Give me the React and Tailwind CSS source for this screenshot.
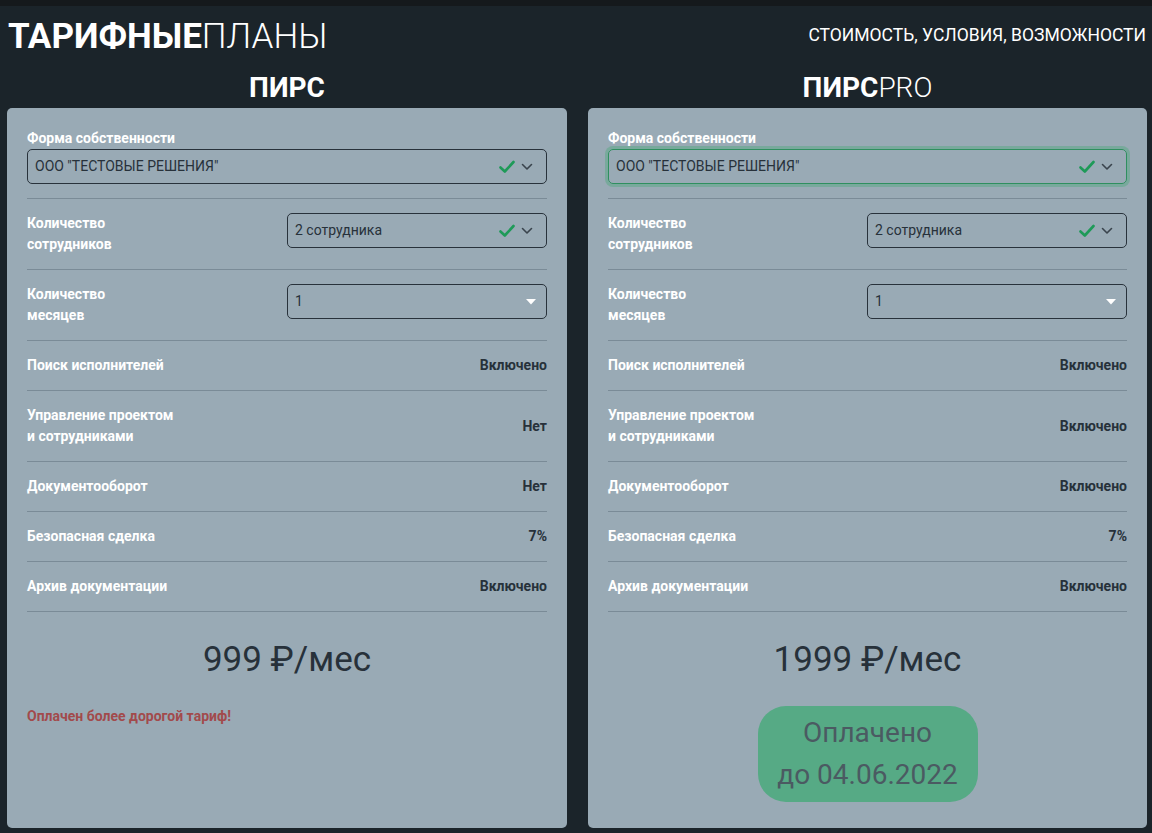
import React from "react";

const font = { fontFamily: "Roboto, 'Noto Sans', sans-serif" };

function Check() {
  return (
    <svg width="16" height="14" viewBox="0 0 16 14" className="shrink-0">
      <path d="M1.5 7.5 L5.8 11.5 L14.5 2" fill="none" stroke="#1e9a58" strokeWidth="2.6" strokeLinecap="round" strokeLinejoin="round" />
    </svg>
  );
}

function Chevron() {
  return (
    <svg width="12" height="8" viewBox="0 0 12 8" className="shrink-0">
      <path d="M1.5 1.5 L6 6 L10.5 1.5" fill="none" stroke="#3a444d" strokeWidth="1.6" strokeLinecap="round" strokeLinejoin="round" />
    </svg>
  );
}

function Select({ value, checked, focus, caret }) {
  return (
    <div
      className={
        "flex h-[35px] w-full items-center rounded-[5px] border pl-[7px] pr-[13px] " +
        (focus
          ? "border-[#2f8f5f] shadow-[0_0_0_3px_rgba(60,170,110,0.35)]"
          : "border-[#28323b]")
      }
    >
      <span className="flex-1 text-[14px] text-[#27313a]">{value}</span>
      {checked ? (
        <div className="flex items-center gap-[6px]">
          <Check />
          <Chevron />
        </div>
      ) : null}
      {caret ? (
        <svg width="10" height="6" viewBox="0 0 10 6" className="mr-[-3px]">
          <path d="M0 0 H10 L5 5.5 Z" fill="#ffffff" />
        </svg>
      ) : null}
    </div>
  );
}

function Row({ label, value }) {
  return (
    <div className="flex items-center justify-between border-b border-[#7a8b97] py-[14px] text-[14px] leading-[21px]">
      <div className="font-bold text-white">{label}</div>
      <div className="font-bold text-[#27313a]">{value}</div>
    </div>
  );
}

function SelectRow({ label, value, checked, caret }) {
  return (
    <div className="flex items-start justify-between border-b border-[#7a8b97] py-[14px] text-[14px] leading-[21px]">
      <div className="font-bold text-white">{label}</div>
      <div className="w-[260px]">
        <Select value={value} checked={checked} caret={caret} />
      </div>
    </div>
  );
}

function Card({ pro, features, price, footer }) {
  return (
    <div className="flex flex-col">
      <div className="flex h-[51px] items-center justify-center pt-[10px] text-[28px] leading-none text-white">
        <span className="font-bold">ПИРС</span>
        {pro ? <span className="font-light">PRO</span> : null}
      </div>
      <div className="h-[720px] rounded-[5px] bg-[#99aab5] px-[20px] pt-[20px]">
        <div className="border-b border-[#7a8b97] pb-[14px]">
          <div className="text-[14px] font-bold leading-[21px] text-white">Форма собственности</div>
          <Select value={'ООО "ТЕСТОВЫЕ РЕШЕНИЯ"'} checked focus={pro} />
        </div>
        <SelectRow label={<>Количество<br />сотрудников</>} value="2 сотрудника" checked />
        <SelectRow label={<>Количество<br />месяцев</>} value="1" caret />
        {features.map((f, i) => (
          <Row key={i} label={f[0]} value={f[1]} />
        ))}
        <div className="pt-[28px] text-center text-[35px] leading-[40px] text-[#27313a]">{price}</div>
        <div className="mt-[26px]">{footer}</div>
      </div>
    </div>
  );
}

export default function App() {
  const left = [
    ["Поиск исполнителей", "Включено"],
    [<>Управление проектом<br />и сотрудниками</>, "Нет"],
    ["Документооборот", "Нет"],
    ["Безопасная сделка", "7%"],
    ["Архив документации", "Включено"],
  ];
  const right = [
    ["Поиск исполнителей", "Включено"],
    [<>Управление проектом<br />и сотрудниками</>, "Включено"],
    ["Документооборот", "Включено"],
    ["Безопасная сделка", "7%"],
    ["Архив документации", "Включено"],
  ];
  return (
    <div className="min-h-[833px] w-[1152px] bg-[#1b242a]" style={font}>
      <div className="h-[6px] bg-[#15191c]" />
      <div className="flex items-start justify-between pl-[8px] pr-[6px] pt-[11px]">
        <div className="text-[35px] leading-[40px] text-white">
          <span className="font-bold">ТАРИФНЫЕ</span>
          <span className="font-light">ПЛАНЫ</span>
        </div>
        <div className="pt-[7px] text-[17.5px] leading-[22px] text-white">СТОИМОСТЬ, УСЛОВИЯ, ВОЗМОЖНОСТИ</div>
      </div>
      <div className="grid grid-cols-[560px_559px] gap-[21px] pl-[7px]">
        <Card
          features={left}
          price="999 ₽/мес"
          footer={
            <div className="pt-[1px] text-[14px] font-bold leading-[18px] text-[#a24a4c]">
              Оплачен более дорогой тариф!
            </div>
          }
        />
        <Card
          pro
          features={right}
          price="1999 ₽/мес"
          footer={
            <div className="flex justify-center">
              <div className="flex h-[96px] w-[220px] flex-col items-center justify-center rounded-[28px] bg-[#56aa85] text-[28px] leading-[42px] text-[#4b5a62]">
                <span>Оплачено</span>
                <span>до 04.06.2022</span>
              </div>
            </div>
          }
        />
      </div>
    </div>
  );
}
